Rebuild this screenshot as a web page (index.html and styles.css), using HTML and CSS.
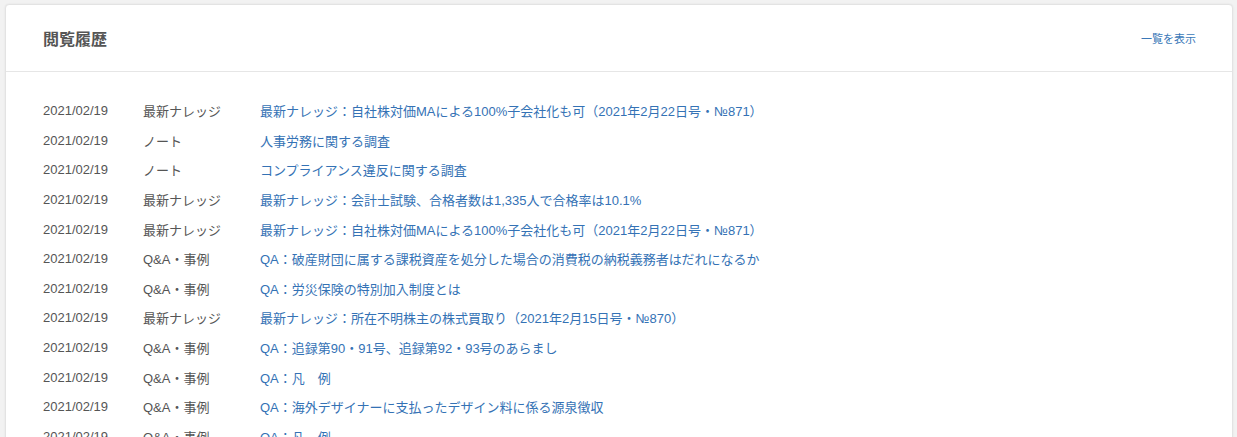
FILE: index.html
```html
<!DOCTYPE html>
<html lang="ja">
<head>
    <meta charset="UTF-8">
    <meta name="viewport" content="width=device-width, initial-scale=1.0">
    <title>閲覧履歴</title>
    <link rel="stylesheet" href="styles.css">
</head>
<body>
    <div class="card">
        <div class="card-header">
            <h2 class="card-title">閲覧履歴</h2>
            <a class="more-link" href="#">一覧を表示</a>
        </div>
        <div class="card-body">
            <ul class="history">
                <li><span class="date">2021/02/19</span><span class="type">最新ナレッジ</span><a href="#">最新ナレッジ：自社株対価MAによる100%子会社化も可（2021年2月22日号・№871）</a></li>
                <li><span class="date">2021/02/19</span><span class="type">ノート</span><a href="#">人事労務に関する調査</a></li>
                <li><span class="date">2021/02/19</span><span class="type">ノート</span><a href="#">コンプライアンス違反に関する調査</a></li>
                <li><span class="date">2021/02/19</span><span class="type">最新ナレッジ</span><a href="#">最新ナレッジ：会計士試験、合格者数は1,335人で合格率は10.1%</a></li>
                <li><span class="date">2021/02/19</span><span class="type">最新ナレッジ</span><a href="#">最新ナレッジ：自社株対価MAによる100%子会社化も可（2021年2月22日号・№871）</a></li>
                <li><span class="date">2021/02/19</span><span class="type">Q&amp;A・事例</span><a href="#">QA：破産財団に属する課税資産を処分した場合の消費税の納税義務者はだれになるか</a></li>
                <li><span class="date">2021/02/19</span><span class="type">Q&amp;A・事例</span><a href="#">QA：労災保険の特別加入制度とは</a></li>
                <li><span class="date">2021/02/19</span><span class="type">最新ナレッジ</span><a href="#">最新ナレッジ：所在不明株主の株式買取り（2021年2月15日号・№870）</a></li>
                <li><span class="date">2021/02/19</span><span class="type">Q&amp;A・事例</span><a href="#">QA：追録第90・91号、追録第92・93号のあらまし</a></li>
                <li><span class="date">2021/02/19</span><span class="type">Q&amp;A・事例</span><a href="#">QA：凡　例</a></li>
                <li><span class="date">2021/02/19</span><span class="type">Q&amp;A・事例</span><a href="#">QA：海外デザイナーに支払ったデザイン料に係る源泉徴収</a></li>
                <li><span class="date">2021/02/19</span><span class="type">Q&amp;A・事例</span><a href="#">QA：凡　例</a></li>
            </ul>
        </div>
    </div>
</body>
</html>
```

FILE: styles.css
```css
body {
    font-family: "Liberation Sans", "Noto Sans CJK JP", sans-serif;
    margin: 0;
    padding: 4px 4px 0 5px;
    background-color: #f2f2f2;
    color: #555;
}
.card {
    background: #fff;
    border: 1px solid #e3e3e3;
    border-radius: 4px;
    box-shadow: 0 0 2px rgba(0, 0, 0, 0.08);
}
.card-header {
    display: flex;
    justify-content: space-between;
    align-items: center;
    height: 66px;
    padding: 0 36px 0 37px;
    border-bottom: 1px solid #e6e6e6;
}
.card-title {
    margin: 0;
    font-size: 16px;
    font-weight: bold;
    color: #555;
}
.more-link {
    font-size: 11px;
    color: #3a78b8;
    text-decoration: none;
}
.card-body {
    padding: 24px 37px 0;
}
.history {
    list-style: none;
    margin: 0;
    padding: 0;
}
.history li {
    display: flex;
    align-items: center;
    height: 29.6px;
    font-size: 13px;
    white-space: nowrap;
}
.history .date {
    width: 100px;
    color: #555;
}
.history .type {
    width: 117px;
    color: #555;
}
.history a {
    color: #3472b5;
    text-decoration: none;
}
```
